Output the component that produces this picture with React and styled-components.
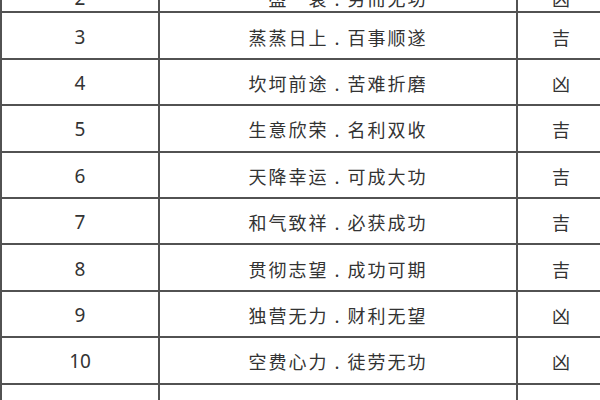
import React from 'react';
import styled, { createGlobalStyle } from 'styled-components';

const GlobalStyle = createGlobalStyle`
  html, body {
    margin: 0;
    padding: 0;
    background: #fff;
    overflow: hidden;
  }
  body {
    width: 600px;
    height: 400px;
    font-family: "Noto Sans", "Noto Sans CJK SC", sans-serif;
  }
`;

const Table = styled.div`
  width: 604px;
  margin-top: -33px;
  border-left: 2px solid #525252;
  color: #333;
`;

const Row = styled.div`
  display: grid;
  grid-template-columns: 158px 358px 1fr;
  height: 46.4px;
  box-sizing: border-box;
  border-bottom: 2px solid #525252;
`;

const Cell = styled.div`
  display: flex;
  align-items: ${props => (props.edge ? 'flex-end' : 'center')};
  justify-content: center;
  padding-top: ${props => (props.edge ? '0' : '2px')};
  box-sizing: border-box;
  border-right: 2px solid #525252;
  font-size: ${props => (props.num ? '19px' : '18px')};
  line-height: 26px;
  letter-spacing: ${props => (props.wide ? '2px' : '0')};
  font-family: ${props =>
    props.num
      ? '"Noto Sans", "Open Sans", sans-serif'
      : '"Noto Sans CJK SC", "Noto Sans", sans-serif'};
  white-space: nowrap;
`;

const rows = [
  { n: 2, text: '一盛一衰 . 劳而无功', luck: '凶' },
  { n: 3, text: '蒸蒸日上 . 百事顺遂', luck: '吉' },
  { n: 4, text: '坎坷前途 . 苦难折磨', luck: '凶' },
  { n: 5, text: '生意欣荣 . 名利双收', luck: '吉' },
  { n: 6, text: '天降幸运 . 可成大功', luck: '吉' },
  { n: 7, text: '和气致祥 . 必获成功', luck: '吉' },
  { n: 8, text: '贯彻志望 . 成功可期', luck: '吉' },
  { n: 9, text: '独营无力 . 财利无望', luck: '凶' },
  { n: 10, text: '空费心力 . 徒劳无功', luck: '凶' },
  { n: 11, text: '稳健着实 . 必得人望', luck: '吉' },
];

export default function App() {
  return (
    <>
      <GlobalStyle />
      <Table>
        {rows.map((r, i) => (
          <Row key={r.n}>
            <Cell num edge={i === 0}>{r.n}</Cell>
            <Cell wide edge={i === 0}>{r.text}</Cell>
            <Cell edge={i === 0}>{r.luck}</Cell>
          </Row>
        ))}
      </Table>
    </>
  );
}
